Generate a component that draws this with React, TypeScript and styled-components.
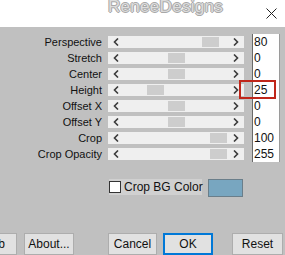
import { Fragment } from 'react'
import styled, { createGlobalStyle } from 'styled-components'

/*
 * Types.
 */

interface SliderRow {
  label: string
  value: string
  thumb: number
}

/*
 * Data.
 */

const rows: SliderRow[] = [
  { label: 'Perspective', value: '80', thumb: 94 },
  { label: 'Stretch', value: '0', thumb: 60 },
  { label: 'Center', value: '0', thumb: 60 },
  { label: 'Height', value: '25', thumb: 39 },
  { label: 'Offset X', value: '0', thumb: 60 },
  { label: 'Offset Y', value: '0', thumb: 60 },
  { label: 'Crop', value: '100', thumb: 102 },
  { label: 'Crop Opacity', value: '255', thumb: 102 },
]

/*
 * Styles.
 */

const GlobalStyle = createGlobalStyle`
  html, body {
    margin: 0;
    padding: 0;
    width: 285px;
    height: 255px;
    overflow: hidden;
    background: #c0c0c0;
  }
`

const Window = styled.div`
  width: 285px;
  height: 255px;
  overflow: hidden;
  font-family: 'Liberation Sans', Arial, sans-serif;
  font-size: 11px;
  color: #111;
  background: #c0c0c0;
`

const TitleBar = styled.div`
  height: 27px;
  background: #fff;
  display: flex;
  align-items: flex-start;
  overflow: hidden;
`

const Title = styled.div`
  margin-left: 108px;
  margin-top: -3px;
  font-size: 17px;
  letter-spacing: 0.3px;
  color: #dcdcdc;
  text-shadow: -1px 0 #a8a8a8, 1px 0 #a8a8a8, 0 -1px #a8a8a8, 0 1px #a8a8a8;
`

const Close = styled.svg`
  margin-left: auto;
  margin-right: 8px;
  margin-top: 8px;
`

const Grid = styled.div`
  display: grid;
  grid-template-columns: 102px 136px 30px;
  column-gap: 6px;
  grid-auto-rows: 16px;
  margin-top: 7px;
  position: relative;
`

const Label = styled.div`
  text-align: right;
  line-height: 16px;
  white-space: nowrap;
`

const Track = styled.div`
  margin-top: 2px;
  height: 12px;
  background: #efefef;
  position: relative;
  display: flex;
  align-items: center;
  justify-content: space-between;
  padding: 0 5px;
`

const Thumb = styled.div`
  position: absolute;
  top: 1px;
  width: 17px;
  height: 10px;
  background: #cdcdcd;
`

const ValueCell = styled.div`
  margin-left: 2px;
  background: #fff;
  border-left: 1px solid #6a6a6a;
  border-right: 1px solid #9a9a9a;
  line-height: 16px;
  font-size: 12px;
  padding-left: 1px;
`

const Highlight = styled.div`
  position: absolute;
  left: 239px;
  top: 46px;
  width: 33px;
  height: 15px;
  border: 2px solid #c0261a;
`

const OptionRow = styled.div`
  display: flex;
  align-items: flex-start;
  margin-top: 17px;
  margin-left: 109px;
  gap: 6px;
`

const CheckLabel = styled.label`
  display: flex;
  align-items: center;
  gap: 3px;
  width: 93px;
  height: 16px;
  background: #d0d0d0;
  font-size: 12px;
  white-space: nowrap;
`

const Box = styled.span`
  flex-shrink: 0;
  width: 12px;
  height: 12px;
  background: #fff;
  border: 1px solid #333;
  box-sizing: border-box;
`

const Swatch = styled.div`
  width: 35px;
  height: 18px;
  box-sizing: border-box;
  background: #78a6c0;
  border: 1px solid #6a7e8a;
`

const Buttons = styled.div`
  display: flex;
  margin-top: 36px;
`

const Button = styled.div<{ $width: number; $gap: number; $primary?: boolean; $clipped?: boolean }>`
  width: ${(p) => p.$width}px;
  margin-left: ${(p) => p.$gap}px;
  height: 22px;
  box-sizing: border-box;
  flex-shrink: 0;
  display: flex;
  align-items: center;
  justify-content: ${(p) => (p.$clipped ? 'flex-end' : 'center')};
  padding-right: ${(p) => (p.$clipped ? '11px' : '0')};
  font-size: 12px;
  background: #e1e1e1;
  border: ${(p) => (p.$primary ? '2px solid #0078d7' : '1px solid #adadad')};
`

/*
 * Component.
 */

const Arrow = ({ right }: { right?: boolean }) => (
  <svg width="6" height="8" viewBox="0 0 6 8">
    <path
      d={right ? 'M1 0.5 L4.5 4 L1 7.5' : 'M5 0.5 L1.5 4 L5 7.5'}
      fill="none"
      stroke="#3c3c3c"
      strokeWidth="1.6"
    />
  </svg>
)

export default function App() {
  return (
    <Window>
      <GlobalStyle />
      <TitleBar>
        <Title>ReneeDesigns</Title>
        <Close width="11" height="11" viewBox="0 0 11 11">
          <path d="M0.5 0.5 L10.5 10.5 M10.5 0.5 L0.5 10.5" stroke="#222" strokeWidth="1" />
        </Close>
      </TitleBar>
      <Grid>
        {rows.map((row) => (
          <Fragment key={row.label}>
            <Label>{row.label}</Label>
            <Track>
              <Arrow />
              <Thumb style={{ left: row.thumb }} />
              <Arrow right />
            </Track>
            <ValueCell>{row.value}</ValueCell>
          </Fragment>
        ))}
        <Highlight />
      </Grid>
      <OptionRow>
        <CheckLabel>
          <Box />
          Crop BG Color
        </CheckLabel>
        <Swatch />
      </OptionRow>
      <Buttons>
        <Button $width={50} $gap={-33} $clipped>
          b
        </Button>
        <Button $width={50} $gap={7}>
          About...
        </Button>
        <Button $width={49} $gap={34}>
          Cancel
        </Button>
        <Button $width={50} $gap={6} $primary>
          OK
        </Button>
        <Button $width={51} $gap={19}>
          Reset
        </Button>
      </Buttons>
    </Window>
  )
}
